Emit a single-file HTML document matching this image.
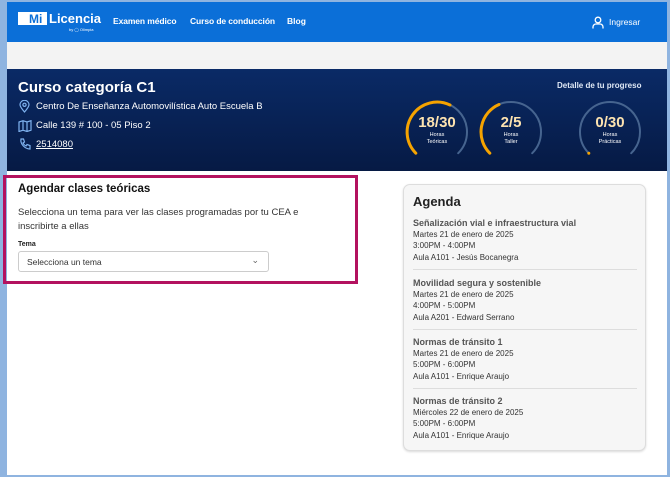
<!DOCTYPE html>
<html><head><meta charset="utf-8"><style>
*{margin:0;padding:0;box-sizing:border-box}
body{width:670px;height:477px;overflow:hidden;background:#fff;font-family:"Liberation Sans",sans-serif;position:relative}
.frame{position:absolute;left:0;top:0;width:670px;height:477px;border:2px solid #8fb4e0;border-left-width:7px;border-right-width:3px}
.nav{position:absolute;left:7px;top:2px;width:660px;height:40px;background:#0b6fd8;color:#fff}
.gray{position:absolute;left:7px;top:42px;width:660px;height:27px;background:#f3f3f3}
.hero{position:absolute;left:7px;top:69px;width:660px;height:102px;background:linear-gradient(180deg,#0a2a66,#061a44);color:#fff}
.a{position:absolute;white-space:nowrap}
.card{position:absolute;left:403px;top:184px;width:243px;height:267px;background:#f6f6f6;border:1px solid #ddd;border-radius:7px;box-shadow:0 1px 2px rgba(0,0,0,.15)}
.it{position:absolute;left:9px;font-size:8px;color:#333;line-height:11.3px}
.it b{font-size:9px;color:#555;display:block;line-height:12px}
.hr{position:absolute;left:9px;width:224px;height:1px;background:#ddd}
</style></head><body>
<div class="frame"></div>
<div class="nav">
 <div class="a" style="left:11px;top:10px;width:29px;height:13px;background:#fff"></div>
 <div class="a" style="left:22px;top:10px;font-size:12px;font-weight:bold;color:#0b6fd8">Mi</div>
 <div class="a" style="left:42px;top:9px;font-size:13px;font-weight:bold">Licencia</div>
 <div class="a" style="left:62px;top:25px;font-size:4px">by ◯ Olimpia</div>
 <div class="a" style="left:106px;top:14px;font-size:8.5px;font-weight:bold;letter-spacing:-0.1px">Examen médico</div>
 <div class="a" style="left:183px;top:14px;font-size:8.5px;font-weight:bold;letter-spacing:-0.1px">Curso de conducción</div>
 <div class="a" style="left:280px;top:14px;font-size:8.5px;font-weight:bold">Blog</div>
 <svg class="a" style="left:585px;top:14px" width="12" height="13" viewBox="0 0 12 13" fill="none" stroke="#fff" stroke-width="1.3"><circle cx="6" cy="4" r="2.8"/><path d="M1 12.5v-1.5a3 3 0 0 1 3-3h4a3 3 0 0 1 3 3v1.5"/></svg>
 <div class="a" style="left:602px;top:15px;font-size:8.5px">Ingresar</div>
</div>
<div class="gray"></div>
<div class="hero">
 <div class="a" style="left:11px;top:10px;font-size:15px;font-weight:bold">Curso categoría C1</div>
 <svg class="a" style="left:12px;top:31px" width="11" height="13" viewBox="0 0 11 13" fill="none" stroke="#7fb3f0" stroke-width="1.2"><path d="M5.5 12C2 8 1 6.5 1 4.8a4.5 4.5 0 0 1 9 0C10 6.5 9 8 5.5 12z"/><circle cx="5.5" cy="4.8" r="1.6"/></svg>
 <div class="a" style="left:29px;top:32px;font-size:9.5px">Centro De Enseñanza Automovilística Auto Escuela B</div>
 <svg class="a" style="left:11px;top:51px" width="14" height="12" viewBox="0 0 14 12" fill="none" stroke="#7fb3f0" stroke-width="1.2"><path d="M1 2l4-1.3 4 1.3 4-1.3v9.5l-4 1.3-4-1.3-4 1.3zM5 .7v9.5M9 2v9.5"/></svg>
 <div class="a" style="left:29px;top:51px;font-size:9.5px">Calle 139 # 100 - 05 Piso 2</div>
 <svg class="a" style="left:12px;top:69px" width="12" height="12" viewBox="0 0 12 12" fill="none" stroke="#7fb3f0" stroke-width="1.2"><path d="M2 1h2.5l1 3-1.5 1a6 6 0 0 0 3 3l1-1.5 3 1V11C6 11 1 6 2 1z"/></svg>
 <div class="a" style="left:29px;top:70px;font-size:9.5px;text-decoration:underline">2514080</div>
 <div class="a" style="left:550px;top:12px;font-size:8px;font-weight:bold;color:#dfe8f5">Detalle de tu progreso</div>
 <svg class="a" style="left:385px;top:22px" width="260" height="80" viewBox="0 0 260 80" fill="none" stroke-width="3" stroke-linecap="round">
  <g transform="translate(45,41)"><path d="M-21.2 21.2A30 30 0 1 1 21.2 21.2" stroke="#46648f" stroke-width="2"/><path d="M-21.2 21.2A30 30 0 0 1 13 -27" stroke="#f5a300"/></g>
  <g transform="translate(119,41)"><path d="M-21.2 21.2A30 30 0 1 1 21.2 21.2" stroke="#46648f" stroke-width="2"/><path d="M-21.2 21.2A30 30 0 0 1 -12 -27.5" stroke="#f5a300"/></g>
  <g transform="translate(218,41)"><path d="M-21.2 21.2A30 30 0 1 1 21.2 21.2" stroke="#46648f" stroke-width="2"/><circle cx="-21.2" cy="21.2" r="1.5" fill="#f5a300" stroke="none"/></g>
 </svg>
 <div class="a" style="left:400px;top:45px;width:60px;text-align:center;font-size:15px;font-weight:bold;color:#fde3b0">18/30</div>
 <div class="a" style="left:400px;top:63px;width:60px;text-align:center;font-size:5.5px;line-height:7px">Horas<br>Teóricas</div>
 <div class="a" style="left:474px;top:45px;width:60px;text-align:center;font-size:15px;font-weight:bold;color:#fde3b0">2/5</div>
 <div class="a" style="left:474px;top:63px;width:60px;text-align:center;font-size:5.5px;line-height:7px">Horas<br>Taller</div>
 <div class="a" style="left:573px;top:45px;width:60px;text-align:center;font-size:15px;font-weight:bold;color:#fde3b0">0/30</div>
 <div class="a" style="left:573px;top:63px;width:60px;text-align:center;font-size:5.5px;line-height:7px">Horas<br>Prácticas</div>
</div>
<div class="a" style="left:3px;top:175px;width:355px;height:109px;border:3px solid #b3125f"></div>
<div class="a" style="left:18px;top:183px;font-size:11.5px;font-weight:bold;color:#111">Agendar clases teóricas</div>
<div class="a" style="left:18px;top:206px;font-size:9.5px;color:#333;line-height:14px">Selecciona un tema para ver las clases programadas por tu CEA e<br>inscribirte a ellas</div>
<div class="a" style="left:18px;top:241px;font-size:7px;font-weight:bold;color:#222">Tema</div>
<div class="a" style="left:18px;top:251px;width:251px;height:21px;border:1px solid #ccc;border-radius:3px;font-size:8.5px;color:#333;padding:5px 8px">Selecciona un tema<span style="position:absolute;right:9px;top:3px;font-size:9px;color:#666">⌄</span></div>
<div class="card">
 <div class="a" style="left:9px;top:9px;font-size:13px;font-weight:bold;color:#222">Agenda</div>
 <div class="it" style="top:32px"><b>Señalización vial e infraestructura vial</b>Martes 21 de enero de 2025<br>3:00PM - 4:00PM<br>Aula A101 - Jesús Bocanegra</div>
 <div class="hr" style="top:84px"></div>
 <div class="it" style="top:92px"><b>Movilidad segura y sostenible</b>Martes 21 de enero de 2025<br>4:00PM - 5:00PM<br>Aula A201 - Edward Serrano</div>
 <div class="hr" style="top:144px"></div>
 <div class="it" style="top:151px"><b>Normas de tránsito 1</b>Martes 21 de enero de 2025<br>5:00PM - 6:00PM<br>Aula A101 - Enrique Araujo</div>
 <div class="hr" style="top:203px"></div>
 <div class="it" style="top:210px"><b>Normas de tránsito 2</b>Miércoles 22 de enero de 2025<br>5:00PM - 6:00PM<br>Aula A101 - Enrique Araujo</div>
</div>
</body></html>
